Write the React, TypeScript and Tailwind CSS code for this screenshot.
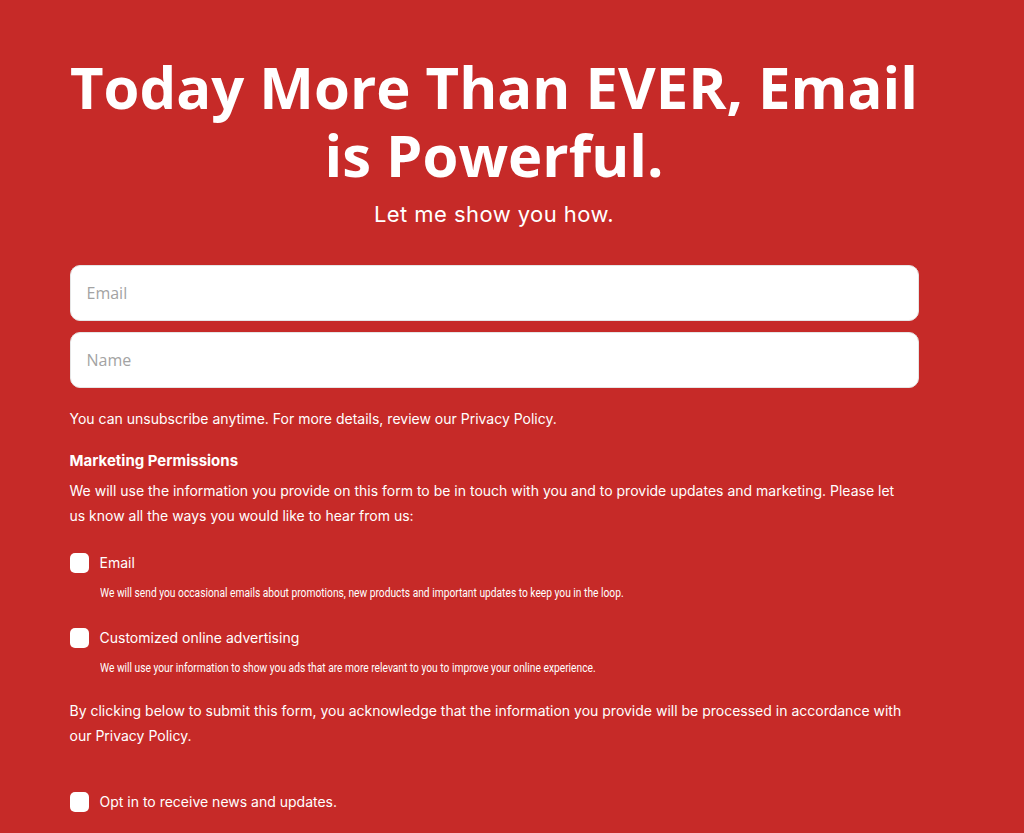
function Check({ label }: { label: string }) {
  return (
    <label className="flex items-center gap-[11px]">
      <span className="h-[20px] w-[19px] shrink-0 rounded-[5px] bg-white" />
      <span className="text-[14px] leading-[20px] text-white">{label}</span>
    </label>
  );
}

function Note({ children }: { children: string }) {
  return (
    <p className="ml-[30px] origin-left scale-x-[0.853] whitespace-nowrap font-['Roboto',sans-serif] text-[12px] leading-[16px]">
      {children}
    </p>
  );
}

export default function App() {
  return (
    <div className="min-h-[833px] w-full bg-[#c62a28] font-['Inter',sans-serif] text-white">
      <div className="mx-auto w-[849px] -translate-x-[18px] pt-[53px]">
        <h1 className="text-center font-['Open_Sans',sans-serif] text-[58px] font-bold leading-[68px]">
          Today More Than EVER, Email is Powerful.
        </h1>
        <p className="mt-[10px] text-center text-[22px] leading-[30px] tracking-[0.02em]">Let me show you how.</p>

        <div className="mt-[36px] flex flex-col gap-[11px]">
          <input
            placeholder="Email"
            className="h-[56px] w-full rounded-[10px] border border-[#e5e5e5] bg-white px-[16px] font-['Open_Sans',sans-serif] text-[16px] text-gray-700 outline-none placeholder:text-[#a3a3a3]"
          />
          <input
            placeholder="Name"
            className="h-[56px] w-full rounded-[10px] border border-[#e5e5e5] bg-white px-[16px] font-['Open_Sans',sans-serif] text-[16px] text-gray-700 outline-none placeholder:text-[#a3a3a3]"
          />
        </div>

        <p className="mt-[21px] text-[14px] leading-[20px]">
          You can unsubscribe anytime. For more details, review our Privacy Policy.
        </p>

        <h2 className="mt-[22px] text-[15px] font-bold leading-[20px]">Marketing Permissions</h2>
        <p className="mt-[7px] max-w-[840px] text-[14px] leading-[25px]">
          We will use the information you provide on this form to be in touch with you and to provide updates and
          marketing. Please let us know all the ways you would like to hear from us:
        </p>

        <div className="mt-[25px]">
          <Check label="Email" />
        </div>
        <div className="mt-[12px]">
          <Note>
            We will send you occasional emails about promotions, new products and important updates to keep you in the
            loop.
          </Note>
        </div>

        <div className="mt-[27px]">
          <Check label="Customized online advertising" />
        </div>
        <div className="mt-[12px]">
          <Note>
            We will use your information to show you ads that are more relevant to you to improve your online
            experience.
          </Note>
        </div>

        <p className="mt-[22px] text-[14px] leading-[25px]">
          By clicking below to submit this form, you acknowledge that the information you provide will be processed in
          accordance with our Privacy Policy.
        </p>

        <div className="mt-[44px]">
          <Check label="Opt in to receive news and updates." />
        </div>
      </div>
    </div>
  );
}
